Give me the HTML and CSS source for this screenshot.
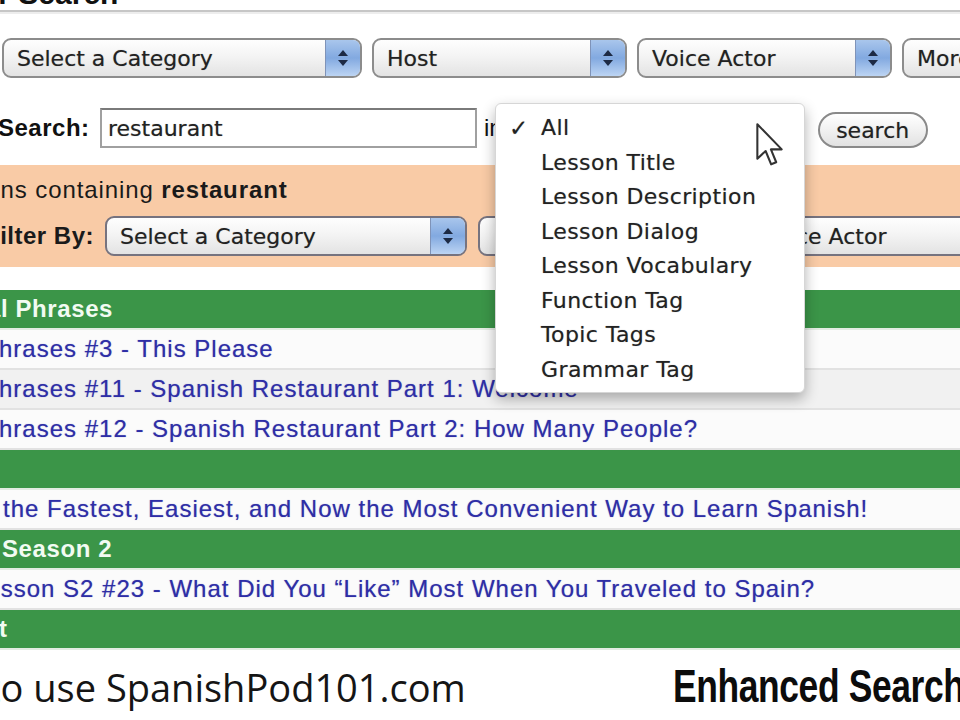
FILE: index.html
```html
<!DOCTYPE html>
<html lang="en">
<head>
    <meta charset="UTF-8">
    <title>Power Search</title>
    <link rel="stylesheet" href="styles.css">
</head>
<body>
    <div class="title"><h1>Power Search</h1></div>

    <div class="selects">
      <div class="select w-cat">Select a Category<span class="stepper"></span></div>
      <div class="select w-sm">Host<span class="stepper"></span></div>
      <div class="select w-sm">Voice Actor<span class="stepper"></span></div>
      <div class="select w-sm">More<span class="stepper"></span></div>
    </div>

    <div class="search-row">
      <label for="q">Search:</label>
      <input id="q" class="search-input" type="text" value="restaurant">
      <span class="in">in</span>
      <div class="select w-in"><span class="stepper"></span></div>
      <button class="search-btn" type="button">search</button>
    </div>

    <div class="results-bar">
      <div class="summary">Lessons containing <b>restaurant</b></div>
      <div class="filter-row">
        <label>Filter By:</label>
        <div class="select w-cat2">Select a Category<span class="stepper"></span></div>
        <div class="select w-host"><span class="stepper"></span></div>
        <div class="select w-sm">Voice Actor<span class="stepper"></span></div>
      </div>
    </div>

    <div class="results">
      <div class="group g-survival">Survival Phrases</div>
      <div class="lesson l-phr"><a href="#">Phrases #3 - This Please</a></div>
      <div class="lesson l-phr alt"><a href="#">Phrases #11 - Spanish Restaurant Part 1: Welcome</a></div>
      <div class="lesson l-phr"><a href="#">Phrases #12 - Spanish Restaurant Part 2: How Many People?</a></div>
      <div class="group">&nbsp;</div>
      <div class="lesson l-intro"><a href="#">the Fastest, Easiest, and Now the Most Convenient Way to Learn Spanish!</a></div>
      <div class="group g-season">Season 2</div>
      <div class="lesson l-season"><a href="#">Lesson S2 #23 - What Did You &ldquo;Like&rdquo; Most When You Traveled to Spain?</a></div>
      <div class="group g-last">Podcast</div>
    </div>

    <div class="caption">
      <span class="cap-left">to use SpanishPod101.com</span>
      <span class="cap-right">Enhanced Search</span>
    </div>

    <!-- open "in" menu over the page -->
    <ul class="menu">
      <li class="checked">All</li>
      <li>Lesson Title</li>
      <li>Lesson Description</li>
      <li>Lesson Dialog</li>
      <li>Lesson Vocabulary</li>
      <li>Function Tag</li>
      <li>Topic Tags</li>
      <li>Grammar Tag</li>
    </ul>

    <svg class="cursor" width="30" height="46" viewBox="0 0 13 20">
      <path d="M1 1 L1 16 L4.6 12.6 L7 18.4 L9.2 17.5 L6.9 11.9 L11.6 11.9 Z" fill="#fff" stroke="#333" stroke-width="0.9" stroke-linejoin="round"/>
    </svg>
</body>
</html>
```

FILE: styles.css
```css
body { margin: 0; width: 960px; height: 720px; overflow: hidden; position: relative; background: #fff; color: #111; font-family: "Liberation Sans", Arial, sans-serif; }

.title { height: 10px; overflow: hidden; border-bottom: 2px solid #c6c6c6; box-shadow: 0 2px 0 #ededed; }
.title h1 { margin: -21px 0 0 -80px; font-size: 30px; line-height: 30px; white-space: nowrap; }

/* mac style popups */
.select { display: flex; align-items: center; flex-shrink: 0; box-sizing: border-box; height: 40px; padding-left: 13px; border: 2px solid #8c8c8c; border-radius: 9px; overflow: hidden; background: linear-gradient(#fefefe, #f4f4f4 45%, #e3e3e3); font: 22px "DejaVu Sans", sans-serif; color: #222; white-space: nowrap; text-shadow: 0 0 1px rgba(0, 0, 0, 0.35); }
.stepper { position: relative; margin-left: auto; align-self: stretch; width: 34px; flex-shrink: 0; border-left: 1px solid #7f93b8; background: linear-gradient(#a9c6ec, #82a9e0 50%, #bcd4f3); }
.stepper::before, .stepper::after { content: ""; position: absolute; left: 12px; border-left: 5px solid transparent; border-right: 5px solid transparent; }
.stepper::before { top: 10px; border-bottom: 6px solid #1d2a44; }
.stepper::after { bottom: 10px; border-top: 6px solid #1d2a44; }
.w-cat { width: 360px; }
.w-cat2 { width: 362px; }
.w-host { width: 260px; }
.w-sm { width: 255px; }
.w-in { width: 296px; margin-left: 6px; }

.selects { display: flex; gap: 10px; margin: 26px 0 0 2px; }

.search-row { display: flex; align-items: center; height: 40px; margin: 30px 0 0 -2px; }
.search-row label { width: 102px; flex-shrink: 0; font-size: 24px; font-weight: bold; letter-spacing: 0.5px; }
.search-input { width: 377px; height: 40px; box-sizing: border-box; padding: 0 6px; border: 2px solid #a0a0a0; border-top-color: #7a7a7a; background: #fff; font: 22px "DejaVu Sans", sans-serif; color: #222; outline: none; text-shadow: 0 0 1px rgba(0, 0, 0, 0.35); }
.in { margin-left: 7px; font-size: 24px; }
.search-btn { align-self: flex-end; width: 110px; height: 36px; margin-left: 13px; border: 2px solid #8a8a8a; border-radius: 18px; background: linear-gradient(#fff, #f1f1f1 50%, #e2e2e2); font: 22px "DejaVu Sans", sans-serif; color: #222; padding: 0; text-shadow: 0 0 1px rgba(0, 0, 0, 0.35); }

.results-bar { margin-top: 17px; padding: 8px 0 11px; background: #f9cba6; }
.summary { margin-left: -68px; font-size: 24px; line-height: 34px; letter-spacing: 0.9px; white-space: nowrap; color: #1a1a1a; }
.filter-row { display: flex; align-items: center; gap: 10px; margin-top: 9px; }
.filter-row label { width: 110px; margin-left: -15px; flex-shrink: 0; font-size: 24px; font-weight: bold; letter-spacing: 0.5px; color: #1a1a1a; }
.filter-row .select { border-color: #76737f; }
.filter-row .w-host { margin-left: 1px; }

.results { margin-top: 23px; }
.group { height: 38px; line-height: 38px; border-bottom: 2px solid #e3ece3; background: #3b9548; color: #f2fbf2; font-size: 24px; font-weight: bold; letter-spacing: 0.6px; white-space: nowrap; }
.lesson { height: 38px; line-height: 38px; border-bottom: 2px solid #e2e2e2; background: #fbfbfb; white-space: nowrap; }
.lesson.alt { background: #f1f1f1; }
.lesson a { color: #2e2ea6; text-decoration: none; font-size: 24px; letter-spacing: 1px; text-shadow: 0 0 1px rgba(40, 40, 160, 0.5); }
.g-survival { text-indent: -90px; }
.g-season { text-indent: 2px; }
.g-last { text-indent: -90px; }
.l-phr { text-indent: -18px; }
.l-intro { text-indent: 3px; }
.l-season { text-indent: -28px; }

.caption { display: grid; grid-template-columns: 673px max-content; align-items: baseline; height: 70px; line-height: 72px; white-space: nowrap; }
.cap-left { margin-left: -13px; font: 38px "Open Sans", sans-serif; color: #151515; }
.cap-right { display: inline-block; transform: scaleX(0.77); transform-origin: left center; font-size: 46px; font-weight: bold; letter-spacing: -0.5px; color: #0c0c0c; }

.menu { position: absolute; z-index: 2; left: 495px; top: 103px; width: 310px; height: 290px; box-sizing: border-box; margin: 0; padding: 7px 0 0; list-style: none; border: 1px solid #d6d6d6; border-radius: 6px; background: #fff; box-shadow: 0 6px 14px rgba(0, 0, 0, 0.3); font: 22px "DejaVu Sans", sans-serif; letter-spacing: 0.4px; color: #222; text-shadow: 0 0 1px rgba(0, 0, 0, 0.35); }
.menu li { position: relative; height: 34.5px; line-height: 34.5px; padding-left: 45px; }
.menu li.checked::before { content: "\2713"; position: absolute; left: 13px; font-size: 23px; font-weight: bold; }

.cursor { position: absolute; z-index: 3; left: 755px; top: 122px; }
```
